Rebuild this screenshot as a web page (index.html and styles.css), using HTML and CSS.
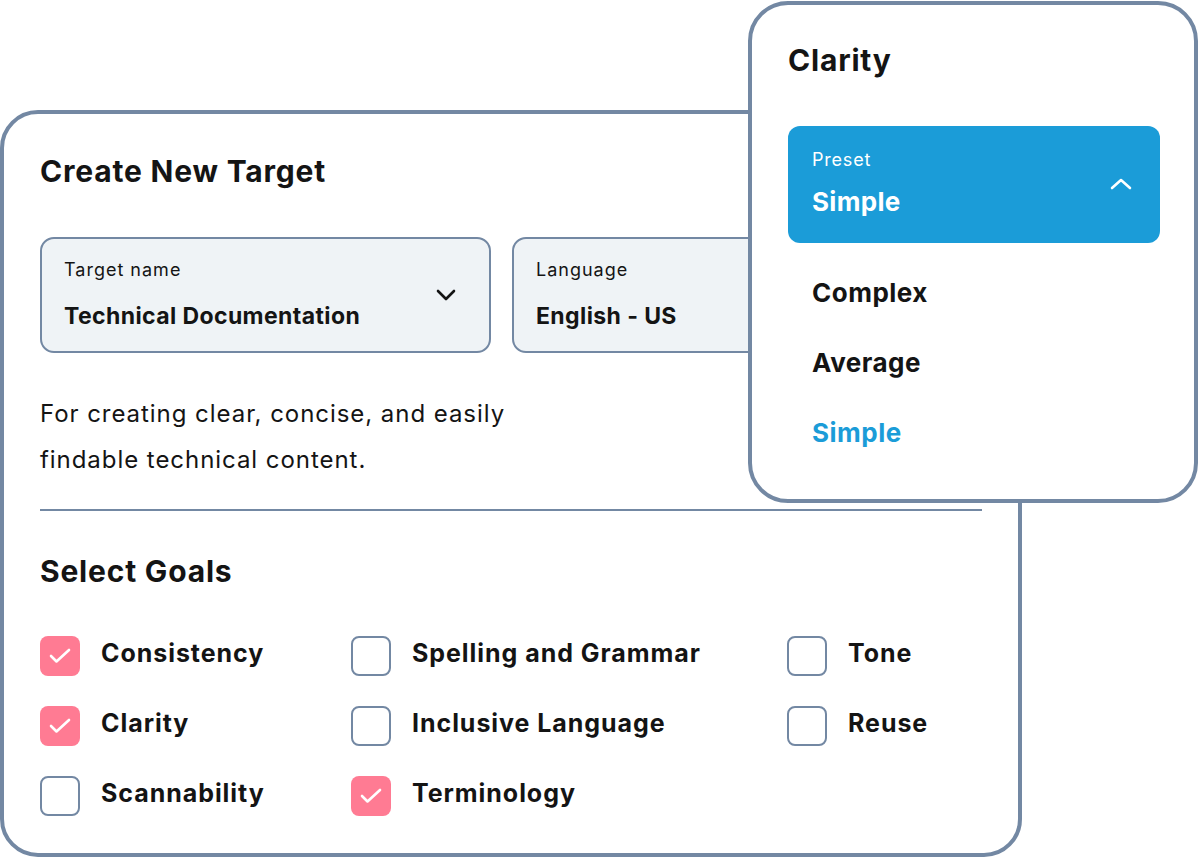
FILE: index.html
```html
<!DOCTYPE html>
<html lang="en">
<head>
  <meta charset="UTF-8">
  <meta name="viewport" content="width=device-width, initial-scale=1.0">
  <title>Create New Target</title>
  <link rel="stylesheet" href="styles.css">
</head>
<body>
  <div class="card">
    <h1>Create New Target</h1>

    <div class="fields">
      <div class="field">
        <div class="field-text">
          <span class="field-label">Target name</span>
          <span class="field-value">Technical Documentation</span>
        </div>
        <svg class="chevron" width="20" height="12" viewBox="0 0 20 12"><path d="M2 2l8 8 8-8" fill="none" stroke="#141414" stroke-width="2.6" stroke-linecap="round" stroke-linejoin="round"/></svg>
      </div>
      <div class="field">
        <div class="field-text">
          <span class="field-label">Language</span>
          <span class="field-value">English - US</span>
        </div>
        <svg class="chevron" width="20" height="12" viewBox="0 0 20 12"><path d="M2 2l8 8 8-8" fill="none" stroke="#141414" stroke-width="2.6" stroke-linecap="round" stroke-linejoin="round"/></svg>
      </div>
    </div>

    <p class="desc">For creating clear, concise, and easily findable technical content.</p>

    <hr class="divider">

    <h2>Select Goals</h2>

    <div class="goals">
      <label class="goal"><span class="box checked"><svg width="24" height="16" viewBox="0 0 24 16"><path d="M3 8l5.5 5.5L21 2" fill="none" stroke="#fff" stroke-width="2.6" stroke-linecap="round" stroke-linejoin="round"/></svg></span>Consistency</label>
      <label class="goal"><span class="box"></span>Spelling and Grammar</label>
      <label class="goal"><span class="box"></span>Tone</label>
      <label class="goal"><span class="box checked"><svg width="24" height="16" viewBox="0 0 24 16"><path d="M3 8l5.5 5.5L21 2" fill="none" stroke="#fff" stroke-width="2.6" stroke-linecap="round" stroke-linejoin="round"/></svg></span>Clarity</label>
      <label class="goal"><span class="box"></span>Inclusive Language</label>
      <label class="goal"><span class="box"></span>Reuse</label>
      <label class="goal"><span class="box"></span>Scannability</label>
      <label class="goal"><span class="box checked"><svg width="24" height="16" viewBox="0 0 24 16"><path d="M3 8l5.5 5.5L21 2" fill="none" stroke="#fff" stroke-width="2.6" stroke-linecap="round" stroke-linejoin="round"/></svg></span>Terminology</label>
    </div>
  </div>

  <!-- dropdown popover, sits over the card -->
  <div class="popover">
    <h3>Clarity</h3>
    <div class="preset">
      <div class="field-text">
        <span class="preset-label">Preset</span>
        <span class="preset-value">Simple</span>
      </div>
      <svg class="chevron-up" width="22" height="12" viewBox="0 0 22 12"><path d="M2 10l9-8 9 8" fill="none" stroke="#fff" stroke-width="2.6" stroke-linecap="round" stroke-linejoin="round"/></svg>
    </div>
    <ul class="options">
      <li>Complex</li>
      <li>Average</li>
      <li class="active">Simple</li>
    </ul>
  </div>
</body>
</html>
```

FILE: styles.css
```css
body {
  margin: 0;
  background: #fff;
  font-family: Inter, "Liberation Sans", sans-serif;
  color: #141414;
  overflow: hidden;
}
.card {
  margin-top: 110px;
  width: 1022px;
  height: 747px;
  box-sizing: border-box;
  border: 4px solid #7388a3;
  border-radius: 38px;
  padding: 40px 36px 0;
  background: #fff;
}
h1, h2, h3 {
  margin: 0;
  font-size: 30px;
  line-height: 34px;
  font-weight: 700;
  letter-spacing: 0.8px;
}
.fields {
  display: flex;
  gap: 21px;
  margin-top: 49px;
}
.field {
  width: 451px;
  height: 116px;
  box-sizing: border-box;
  border: 2px solid #7388a3;
  border-radius: 14px;
  background: #eff3f6;
  padding: 20px 33px 0 22px;
  display: flex;
  align-items: center;
  justify-content: space-between;
}
.field-text {
  display: flex;
  flex-direction: column;
  align-self: flex-start;
}
.field-label {
  font-size: 18px;
  line-height: 22px;
  letter-spacing: 1px;
}
.field-value {
  margin-top: 21px;
  font-size: 23px;
  line-height: 28px;
  font-weight: 700;
  letter-spacing: 0.4px;
}
.chevron {
  margin-top: -20px;
}
.desc {
  margin: 38px 0 0;
  max-width: 480px;
  font-size: 24px;
  line-height: 46px;
  letter-spacing: 0.95px;
}
.divider {
  margin: 26px 0 0;
  border: 0;
  height: 2px;
  background: #7388a3;
}
h2 {
  margin-top: 43px;
}
.goals {
  display: grid;
  grid-template-columns: 311px 436px auto;
  row-gap: 30px;
  margin-top: 48px;
}
.goal {
  display: flex;
  align-items: flex-start;
  gap: 21px;
  font-size: 25px;
  font-weight: 700;
  line-height: 34px;
  letter-spacing: 0.95px;
}
.box {
  width: 40px;
  height: 40px;
  box-sizing: border-box;
  border: 2px solid #7388a3;
  border-radius: 8px;
  display: flex;
  align-items: center;
  justify-content: center;
  flex: none;
}
.box.checked {
  border: 0;
  background: #ff7b93;
}
.popover {
  position: absolute;
  left: 748px;
  top: 1px;
  width: 450px;
  height: 502px;
  box-sizing: border-box;
  border: 4px solid #7388a3;
  border-radius: 40px;
  background: #fff;
  padding: 38px 34px 0 36px;
}
.preset {
  margin-top: 49px;
  height: 117px;
  box-sizing: border-box;
  border-radius: 12px;
  background: #1b9cd8;
  color: #fff;
  padding: 23px 28px 0 24px;
  display: flex;
  align-items: center;
  justify-content: space-between;
}
.preset-label {
  font-size: 18px;
  line-height: 22px;
  letter-spacing: 0.8px;
}
.preset-value {
  margin-top: 16px;
  font-size: 26px;
  line-height: 30px;
  font-weight: 700;
  letter-spacing: 0.3px;
}
.chevron-up {
  margin-top: -24px;
}
.options {
  list-style: none;
  margin: 0;
  padding: 0 0 0 24px;
}
.options li {
  font-size: 26px;
  line-height: 30px;
  font-weight: 700;
  letter-spacing: 0.5px;
  margin-top: 40px;
}
.options li:first-child {
  margin-top: 35px;
}
.options li.active {
  color: #1b9cd8;
}
```
